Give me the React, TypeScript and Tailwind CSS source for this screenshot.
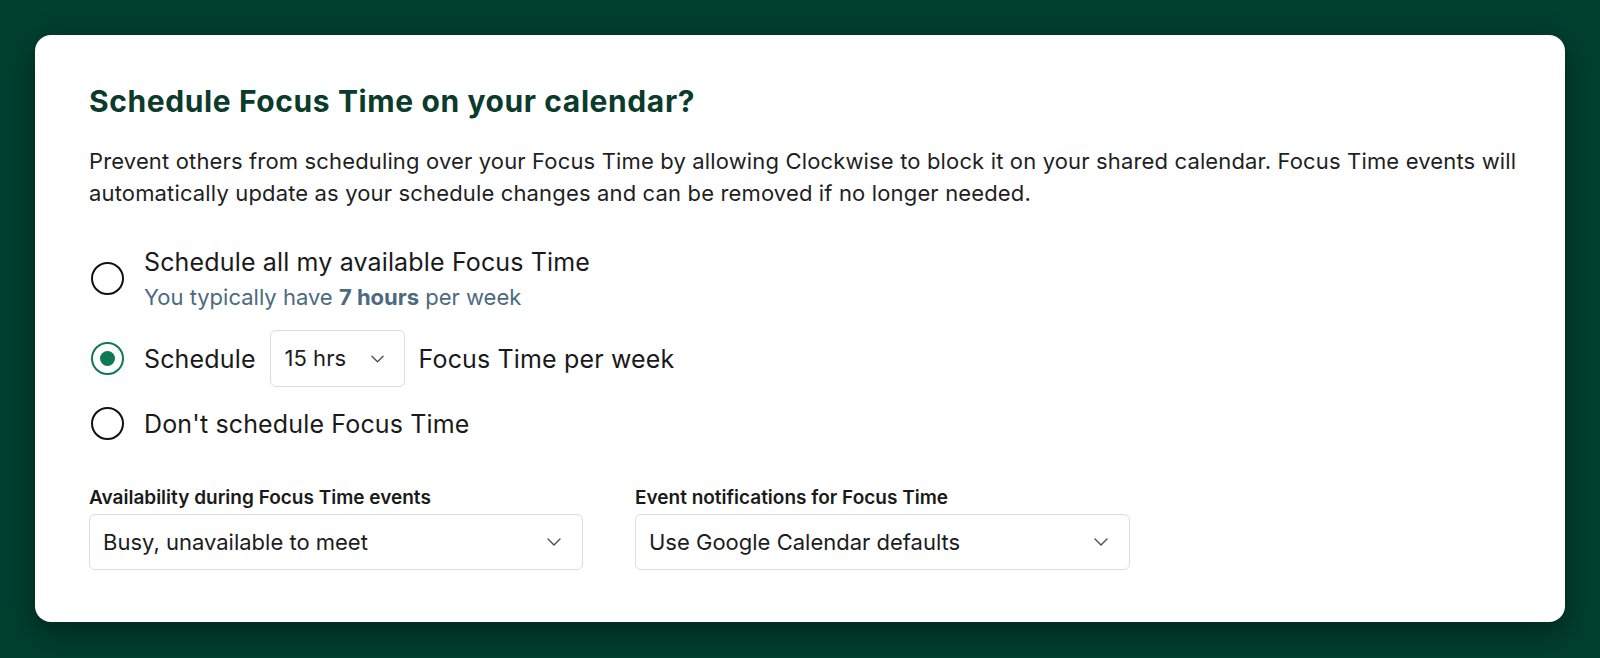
import React, { useState } from 'react';

const font = { fontFamily: 'Inter, "Noto Sans", sans-serif' };

const Chevron = ({ className = '' }: { className?: string }) => (
  <svg viewBox="0 0 14 8" className={className} fill="none">
    <path d="M1 1l6 6 6-6" stroke="#4b4b4b" strokeWidth="1.4" strokeLinecap="round" strokeLinejoin="round" />
  </svg>
);

const Radio = ({ checked }: { checked: boolean }) =>
  checked ? (
    <span className="ml-[2px] flex h-[33px] w-[33px] shrink-0 items-center justify-center rounded-full border-[2px] border-[#0c7a52]">
      <span className="h-[15px] w-[15px] rounded-full bg-[#0c7a52]" />
    </span>
  ) : (
    <span className="ml-[2px] h-[33px] w-[33px] shrink-0 rounded-full border-[2px] border-[#111]" />
  );

const SelectBox = ({ value, width }: { value: string; width: string }) => (
  <div className={`flex h-[56px] items-center justify-between rounded-[6px] border border-[#dcdcdc] bg-white pl-[13px] pr-[21px] ${width}`}>
    <span className="text-[22px] text-[#1c1c1c]">{value}</span>
    <Chevron className="h-[8px] w-[14px]" />
  </div>
);

export default function App() {
  const [choice, setChoice] = useState<'all' | 'some' | 'none'>('some');

  return (
    <div className="min-h-[658px] bg-[#013f2f] px-[35px] pt-[35px] pb-[36px]" style={font}>
      <div className="h-[587px] rounded-[16px] bg-white pl-[54px] pt-[50px] shadow-[0_10px_30px_rgba(0,0,0,0.4)]">
        <h1 className="text-[30px] font-bold leading-[32px] tracking-[0.6px] text-[#0b3b2b]">
          Schedule Focus Time on your calendar?
        </h1>
        <p className="mt-[28px] max-w-[1450px] text-[22px] leading-[32px] tracking-[0.15px] text-[#1f1f1f]">
          Prevent others from scheduling over your Focus Time by allowing Clockwise to block it on your shared calendar. Focus Time events will automatically update as your schedule changes and can be removed if no longer needed.
        </p>

        <div className="mt-[38px] flex flex-col gap-[20px]">
          <div className="flex items-center gap-[20px]" onClick={() => setChoice('all')}>
            <Radio checked={choice === 'all'} />
            <div className="flex flex-col">
              <span className="text-[25px] leading-[30px] tracking-[0.15px] text-[#1a1a1a]">Schedule all my available Focus Time</span>
              <span className="mt-[7px] text-[22px] leading-[26px] text-[#4b6a80]">
                You typically have <b className="font-bold">7 hours</b> per week
              </span>
            </div>
          </div>

          <div className="flex items-center gap-[20px]" onClick={() => setChoice('some')}>
            <Radio checked={choice === 'some'} />
            <span className="text-[25px] leading-[30px] tracking-[0.15px] text-[#1a1a1a]">Schedule</span>
            <div className="-mx-[6px] flex h-[57px] w-[135px] items-center justify-between rounded-[6px] border border-[#dcdcdc] pl-[14px] pr-[20px]">
              <span className="text-[22px] text-[#1c1c1c]">15 hrs</span>
              <Chevron className="h-[8px] w-[13px]" />
            </div>
            <span className="text-[25px] leading-[30px] tracking-[0.15px] text-[#1a1a1a]">Focus Time per week</span>
          </div>

          <div className="flex items-center gap-[20px]" onClick={() => setChoice('none')}>
            <Radio checked={choice === 'none'} />
            <span className="text-[25px] leading-[30px] tracking-[0.15px] text-[#1a1a1a]">Don't schedule Focus Time</span>
          </div>
        </div>

        <div className="mt-[46px] flex gap-[52px]">
          <div className="flex flex-col gap-[4px]">
            <span className="text-[19px] font-semibold leading-[24px] text-[#1a1a1a]">Availability during Focus Time events</span>
            <SelectBox value="Busy, unavailable to meet" width="w-[494px]" />
          </div>
          <div className="flex flex-col gap-[4px]">
            <span className="text-[19px] font-semibold leading-[24px] text-[#1a1a1a]">Event notifications for Focus Time</span>
            <SelectBox value="Use Google Calendar defaults" width="w-[495px]" />
          </div>
        </div>
      </div>
    </div>
  );
}
